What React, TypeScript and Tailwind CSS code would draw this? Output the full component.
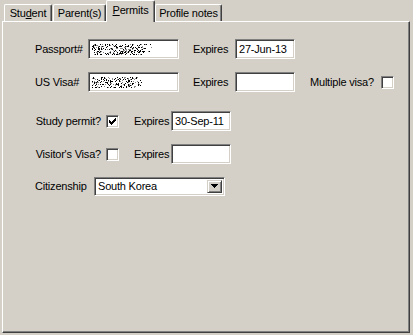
import React from 'react';

const sunken =
  'bg-white border border-t-[#808080] border-l-[#808080] border-r-white border-b-white shadow-[inset_1px_1px_0_#404040,inset_-1px_-1px_0_#d4d0c8]';

// redacted number: deterministic pixel noise
function Noise({ width, seed }: { width: number; seed: number }) {
  let s = seed;
  const rand = () => {
    s = (s * 1103515245 + 12345) % 2147483648;
    return s / 2147483648;
  };
  const px: { x: number; y: number; c: string }[] = [];
  for (let y = 0; y < 11; y++) {
    for (let x = 0; x < width; x++) {
      const edge = x > width - 8 ? 0.18 : 0.36;
      const r = rand();
      if (r < edge * 0.6) px.push({ x, y, c: '#000' });
      else if (r < edge) px.push({ x, y, c: '#8a8a8a' });
    }
  }
  return (
    <svg width={width} height={11} shapeRendering="crispEdges">
      {px.map((p, i) => (
        <rect key={i} x={p.x} y={p.y} width={1} height={1} fill={p.c} />
      ))}
    </svg>
  );
}

const checkRows = ['......X', '.....XX', 'X...XXX', 'XX.XXX.', 'XXXXX..', '.XXX...', '..X....'];

function Checkbox({ checked }: { checked?: boolean }) {
  return (
    <div className={`${sunken} w-[13px] h-[13px] flex items-center justify-center shrink-0`}>
      {checked && (
        <svg width={7} height={7} shapeRendering="crispEdges">
          {checkRows.flatMap((row, y) =>
            row.split('').map((ch, x) =>
              ch === 'X' ? <rect key={`${x}-${y}`} x={x} y={y} width={1} height={1} fill="#000" /> : null
            )
          )}
        </svg>
      )}
    </div>
  );
}

function Field({ w, value, children }: { w: string; value?: string; children?: React.ReactNode }) {
  return (
    <div className={`${sunken} ${w} h-[20px] flex items-center pl-[3px] shrink-0`}>
      {children ?? <span className="leading-none">{value}</span>}
    </div>
  );
}

function Tab({ label, w, selected, ul }: { label: string; w: string; selected?: boolean; ul: number }) {
  const text = (
    <>
      {label.slice(0, ul)}
      <span className="underline underline-offset-[1px]">{label[ul]}</span>
      {label.slice(ul + 1)}
    </>
  );
  return (
    <div
      className={`${w} flex items-center justify-center bg-[#d4d0c8] border-t border-l border-r border-t-white border-l-white border-r-[#404040] shadow-[inset_-1px_0_0_#808080] rounded-tl-[2px] rounded-tr-[2px] ${
        selected ? 'h-[22px] -mb-[1px] pb-[2px] relative z-10' : 'h-[17px] pt-[1px]'
      }`}
    >
      {ul >= 0 ? text : label}
    </div>
  );
}

export default function App() {
  return (
    <div className="w-[413px] h-[335px] bg-[#d4d0c8] text-black text-[11px] tracking-[-0.2px] font-['Liberation_Sans',Arial,sans-serif] overflow-hidden">
      <div className="h-[21px] flex items-end pl-[4px] relative z-10">
        <Tab label="Student" w="w-[48px]" ul={3} />
        <div className="w-[1px]" />
        <Tab label="Parent(s)" w="w-[53px]" ul={-1} />
        <Tab label="Permits" w="w-[49px]" selected ul={0} />
        <Tab label="Profile notes" w="w-[67px]" ul={-1} />
      </div>

      <div className="ml-[2px] w-[408px] h-[312px] border border-t-white border-l-white border-r-[#404040] border-b-[#404040] shadow-[inset_-1px_-1px_0_#808080]">
        <div className="flex flex-col pt-[17px]">
          <div className="flex items-center h-[20px] pl-[32px]">
            <div className="w-[53px]">Passport#</div>
            <Field w="w-[91px]">
              <Noise width={60} seed={17} />
            </Field>
            <div className="ml-[14px] w-[42px]">Expires</div>
            <Field w="w-[60px]" value="27-Jun-13" />
          </div>

          <div className="flex items-center h-[20px] pl-[32px] mt-[13px]">
            <div className="w-[53px]">US Visa#</div>
            <Field w="w-[91px]">
              <Noise width={50} seed={91} />
            </Field>
            <div className="ml-[14px] w-[42px]">Expires</div>
            <Field w="w-[60px]" />
            <div className="ml-[15px] w-[71px]">Multiple visa?</div>
            <Checkbox />
          </div>

          <div className="flex items-center h-[20px] pl-[26px] mt-[19px]">
            <div className="w-[72px] text-right">Study permit?</div>
            <div className="ml-[5px]">
              <Checkbox checked />
            </div>
            <div className="ml-[15px] w-[37px]">Expires</div>
            <Field w="w-[60px]" value="30-Sep-11" />
          </div>

          <div className="flex items-center h-[20px] pl-[26px] mt-[13px]">
            <div className="w-[72px] text-right">Visitor's Visa?</div>
            <div className="ml-[5px]">
              <Checkbox />
            </div>
            <div className="ml-[15px] w-[37px]">Expires</div>
            <Field w="w-[60px]" />
          </div>

          <div className="flex items-center h-[20px] pl-[32px] mt-[12px]">
            <div className="w-[59px]">Citizenship</div>
            <div className={`${sunken} w-[131px] h-[19px] flex items-stretch p-[2px] shrink-0`}>
              <div className="flex-1 flex items-center pl-[1px]">South Korea</div>
              <div className="w-[15px] bg-[#d4d0c8] border border-t-[#d4d0c8] border-l-[#d4d0c8] border-r-[#404040] border-b-[#404040] shadow-[inset_1px_1px_0_#fff,inset_-1px_-1px_0_#808080] flex items-center justify-center">
                <svg width={7} height={4} shapeRendering="crispEdges">
                  <rect x={0} y={0} width={7} height={1} fill="#000" />
                  <rect x={1} y={1} width={5} height={1} fill="#000" />
                  <rect x={2} y={2} width={3} height={1} fill="#000" />
                  <rect x={3} y={3} width={1} height={1} fill="#000" />
                </svg>
              </div>
            </div>
          </div>
        </div>
      </div>
    </div>
  );
}
